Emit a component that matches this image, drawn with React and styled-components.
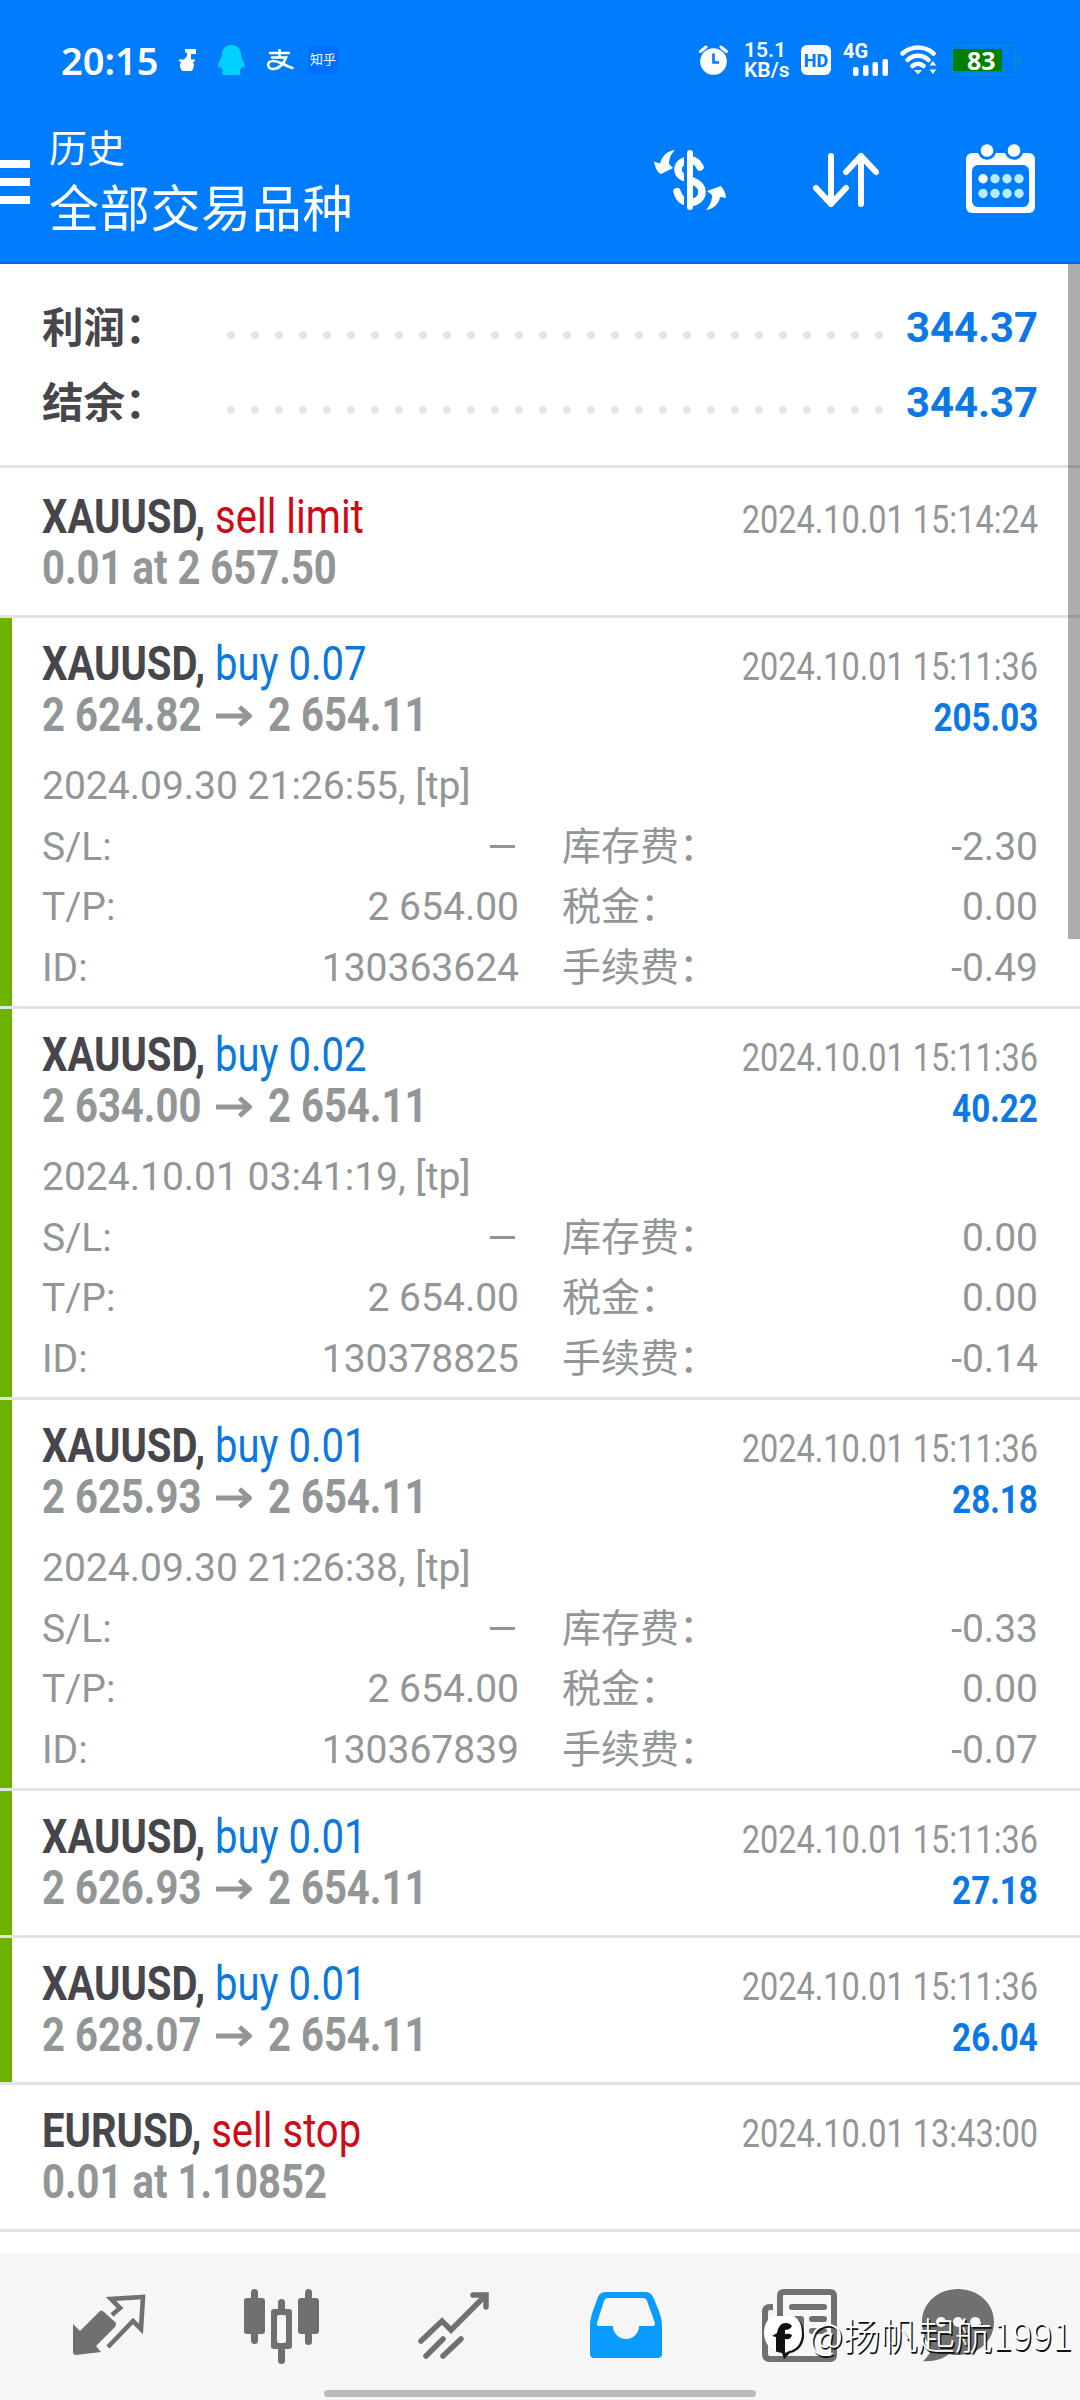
import styled, { createGlobalStyle } from "styled-components";

const GlobalStyle = createGlobalStyle`
  body {
    margin: 0;
    background: #fff;
  }
`;

const deals = [
  {
    symbol: "XAUUSD,",
    type: "sell limit",
    kind: "sell",
    price: "0.01 at 2 657.50",
    time: "2024.10.01 15:14:24",
  },
  {
    symbol: "XAUUSD,",
    type: "buy 0.07",
    kind: "buy",
    open: "2 624.82",
    close: "2 654.11",
    time: "2024.10.01 15:11:36",
    profit: "205.03",
    details: {
      opened: "2024.09.30 21:26:55, [tp]",
      id: "130363624",
      swap: "-2.30",
      fee: "-0.49",
    },
  },
  {
    symbol: "XAUUSD,",
    type: "buy 0.02",
    kind: "buy",
    open: "2 634.00",
    close: "2 654.11",
    time: "2024.10.01 15:11:36",
    profit: "40.22",
    details: {
      opened: "2024.10.01 03:41:19, [tp]",
      id: "130378825",
      swap: "0.00",
      fee: "-0.14",
    },
  },
  {
    symbol: "XAUUSD,",
    type: "buy 0.01",
    kind: "buy",
    open: "2 625.93",
    close: "2 654.11",
    time: "2024.10.01 15:11:36",
    profit: "28.18",
    details: {
      opened: "2024.09.30 21:26:38, [tp]",
      id: "130367839",
      swap: "-0.33",
      fee: "-0.07",
    },
  },
  {
    symbol: "XAUUSD,",
    type: "buy 0.01",
    kind: "buy",
    open: "2 626.93",
    close: "2 654.11",
    time: "2024.10.01 15:11:36",
    profit: "27.18",
  },
  {
    symbol: "XAUUSD,",
    type: "buy 0.01",
    kind: "buy",
    open: "2 628.07",
    close: "2 654.11",
    time: "2024.10.01 15:11:36",
    profit: "26.04",
  },
  {
    symbol: "EURUSD,",
    type: "sell stop",
    kind: "sell",
    price: "0.01 at 1.10852",
    time: "2024.10.01 13:43:00",
  },
];

const App = () => {
  return (
    <Screen>
      <GlobalStyle />
      <Header>
        <StatusBar />
        <Toolbar>
          <MenuButton>
            <span />
            <span />
            <span />
          </MenuButton>
          <Titles>
            <Title>历史</Title>
            <Subtitle>全部交易品种</Subtitle>
          </Titles>
          <Actions>
            <CurrencyIcon />
            <SortIcon />
            <CalendarIcon />
          </Actions>
        </Toolbar>
      </Header>
      <History>
        <Summary>
          <SummaryRow label="利润：" value="344.37" />
          <SummaryRow label="结余：" value="344.37" />
        </Summary>
        {deals.map((deal, i) => (
          <DealItem key={i} deal={deal} first={i === 0} />
        ))}
        <ScrollThumb />
      </History>
      <BottomNav>
        <NavItem>
          <QuotesIcon />
        </NavItem>
        <NavItem>
          <CandlesIcon />
        </NavItem>
        <NavItem>
          <TradeIcon />
        </NavItem>
        <NavItem>
          <TrayIcon />
        </NavItem>
        <NavItem $width={176}>
          <NewsIcon />
        </NavItem>
        <NavItem $width={141}>
          <ChatIcon />
        </NavItem>
        <HomeHandle />
        <Watermark>
          <WatermarkLogo />
          <span>@扬帆起航1991</span>
        </Watermark>
      </BottomNav>
    </Screen>
  );
};

const StatusBar = () => (
  <Status>
    <Clock>20:15</Clock>
    <Notifications>
      <svg width="18" height="22" viewBox="0 0 18 22" fill="#fff">
        <path d="M6 0h11v5h-5v5.500h4v2h-2.300a7 7 0 1 1-11.500 0H0v-2h5L8 7V4L6 3z" />
      </svg>
      <svg width="27" height="30" viewBox="0 0 27 30" fill="#00d2ff">
        <path d="M13.500 0c6 0 9.500 4 9.500 10 0 3 3.500 7 3.700 11 0 2-1.500 2-3 .5-.5 2-1.500 3.500-2.500 4.500 1.500 1 2.500 4-1 4H6c-3 0-2.500-3-.5-4-1-1-2-2.500-2.500-4.500-1.500 1.500-3 1.500-3-.5C.2 17 4 13 4 10 4 4 7.500 0 13.500 0z" />
      </svg>
      <svg width="28" height="22" viewBox="0 0 28 22" fill="none" stroke="#fff" strokeWidth="2.600" strokeLinecap="round">
        <path d="M4 4h19M13.500 1v7M6 8.500h14c-2 6-7 11.500-13 11.500-6 0-7-8 0-8 7 0 12 5 19.500 7" />
      </svg>
      <ZhihuBadge>知乎</ZhihuBadge>
    </Notifications>
    <Indicators>
      <svg width="29" height="30" viewBox="0 0 29 30">
        <circle cx="14.500" cy="16.500" r="13.300" fill="#fff" />
        <path d="M1.500 6.500 7 2M27.500 6.500 22 2" stroke="#fff" strokeWidth="3" strokeLinecap="round" />
        <path d="M14.500 8.500v9H20" stroke="#007cff" strokeWidth="2.600" fill="none" />
      </svg>
      <NetSpeed>
        <span>15.1</span>
        <span>KB/s</span>
      </NetSpeed>
      <HdBadge>HD</HdBadge>
      <Signal>
        <span>4G</span>
        <svg width="35" height="17" viewBox="0 0 35 17" fill="#fff">
          <rect x="0" y="8" width="5.500" height="9" rx="2" />
          <rect x="10" y="6" width="5.500" height="11" rx="2" />
          <rect x="19.500" y="3" width="5.500" height="14" rx="2" />
          <rect x="29.500" y="0" width="5.500" height="17" rx="2" />
        </svg>
      </Signal>
      <svg width="37" height="30" viewBox="0 0 37 30" fill="none" stroke="#fff" strokeWidth="4.500" strokeLinecap="round">
        <path d="M2.500 8.500a23 23 0 0 1 31 0M7.500 15a15 15 0 0 1 21 0M12.500 21a8 8 0 0 1 11 0" />
        <path d="M18 29.500l-4-4.500h8z" fill="#fff" stroke="none" />
        <path d="M33 15.500l4 5.500h-8zM33 29.500l4-5.500h-8z" fill="#fff" stroke="#007cff" strokeWidth="1" />
      </svg>
      <Battery>
        <BatteryLevel>83</BatteryLevel>
      </Battery>
    </Indicators>
  </Status>
);

const SummaryRow = ({ label, value }) => (
  <SummaryLine>
    <SummaryLabel>{label}</SummaryLabel>
    <Dots />
    <SummaryValue>{value}</SummaryValue>
  </SummaryLine>
);

const DealItem = ({ deal, first }) => (
  <Deal $closed={Boolean(deal.profit)} $first={first} $expanded={Boolean(deal.details)}>
    <DealHead>
      <DealTitle>
        <b>{deal.symbol}</b> <Side $kind={deal.kind}>{deal.type}</Side>
      </DealTitle>
      <DealTime>{deal.time}</DealTime>
    </DealHead>
    <DealHead>
      <DealPrice>
        <Price>{deal.price || deal.open}</Price>
        {deal.close && (
          <>
            <ArrowIcon />
            <Price>{deal.close}</Price>
          </>
        )}
      </DealPrice>
      {deal.profit && <DealProfit>{deal.profit}</DealProfit>}
    </DealHead>
    {deal.details && <DealDetails details={deal.details} />}
  </Deal>
);

const DealDetails = ({ details }) => (
  <Details>
    <Opened>{details.opened}</Opened>
    <Field>
      <span>S/L:</span>
      <Dash />
    </Field>
    <Field>
      <span>库存费：</span>
      <span>{details.swap}</span>
    </Field>
    <Field>
      <span>T/P:</span>
      <span>2 654.00</span>
    </Field>
    <Field>
      <span>税金：</span>
      <span>0.00</span>
    </Field>
    <Field>
      <span>ID:</span>
      <span>{details.id}</span>
    </Field>
    <Field>
      <span>手续费：</span>
      <span>{details.fee}</span>
    </Field>
  </Details>
);

const ArrowIcon = () => (
  <Arrow width="36" height="22" viewBox="0 0 36 22" fill="none" stroke="#929697" strokeWidth="4.800">
    <path d="M0 11h33M23.500 2l10 9-10 9" />
  </Arrow>
);

const CurrencyIcon = () => (
  <svg width="72" height="62" viewBox="0 0 72 62" fill="none" stroke="#fff">
    <path d="M46 18c-2-4-5-7-10-7-7 0-12 4-12 9.500 0 6 5 8 12 10.500 8 3 12 6 12 12 0 6-5 10.500-12 10.500-7 0-11-4-13-11" strokeWidth="7.500" strokeLinecap="round" />
    <path d="M33 5v54" strokeWidth="6" stroke="#007cff" />
    <path d="M36 4v54" strokeWidth="6" strokeLinecap="round" />
    <path d="M0 12.500l6 2C8 7 13 2 21 1c-4 4-6 8-6 14l4 4-12 6C4 24 1 19 0 12.500z" fill="#fff" stroke="none" />
    <path d="M72 49l-6-1c-1 6-6 12-14 13 4-5 6-9 6-15l-5-4 14-5c3 4 5 8 5 12z" fill="#fff" stroke="none" />
  </svg>
);

const SortIcon = () => (
  <svg width="66" height="56" viewBox="0 0 66 56" fill="none" stroke="#fff" strokeWidth="6" strokeLinecap="round" strokeLinejoin="round">
    <path d="M18 4v48M3 36l15 16 15-16" />
    <path d="M48 52V4M33 20 48 4l15 16" />
  </svg>
);

const CalendarIcon = () => (
  <svg width="70" height="72" viewBox="0 0 70 72">
    <rect x="0" y="9" width="69" height="60" rx="6" fill="#fff" />
    <rect x="6" y="21" width="57" height="42" rx="6" fill="#007cff" />
    <g fill="#fff" stroke="#007cff" strokeWidth="3">
      <circle cx="21" cy="6.500" r="7.800" />
      <circle cx="48" cy="6.500" r="7.800" />
    </g>
    {[17, 29, 41, 53].map((x) => (
      <g key={x} fill={x === 17 ? "#fff" : "#b8ecff"}>
        <circle cx={x} cy="34.700" r="4.700" />
        <circle cx={x} cy="49.500" r="4.700" fill="#b8ecff" />
      </g>
    ))}
  </svg>
);

const QuotesIcon = () => (
  <svg width="74" height="76" viewBox="0 0 74 76">
    <path d="M0 35l7 7 19-19q2-3 5 0l11 10q2 2 0 5L23 57l5 6-25 3q-3 0-3-3z" fill="#707070" />
    <path d="M39 26l8-7-9-9 32-2-2 32-8-8-25 26" fill="none" stroke="#707070" strokeWidth="4.600" />
  </svg>
);

const CandlesIcon = () => (
  <svg width="76" height="76" viewBox="0 0 76 76" fill="#707070">
    <rect x="7" y="0" width="7" height="55" rx="3.500" />
    <rect x="0" y="9" width="21" height="36" rx="3" />
    <rect x="61" y="0" width="7" height="56" rx="3.500" />
    <rect x="54" y="9" width="21" height="36" rx="3" />
    <rect x="34" y="10" width="7" height="65" rx="3.500" />
    <rect x="27" y="20" width="21" height="40" rx="3" />
    <rect x="33" y="26" width="9" height="28" rx="2" fill="#f6f6f6" />
  </svg>
);

const TradeIcon = () => (
  <svg width="74" height="76" viewBox="0 0 74 76" fill="none" stroke="#707070" strokeWidth="5.500" strokeLinecap="round">
    <path d="M4 52l21-20 9 9 35-35M56 6h13v12" />
    <path d="M9 67l17-17M26 67l18-17" />
  </svg>
);

const TrayIcon = () => (
  <svg width="74" height="76" viewBox="0 0 74 76">
    <path d="M17 3h39q6 0 8 5c5 11 9 20 9 29v28q0 4-4 4H5q-4 0-4-4V37C1 28 5 19 9 8q2-5 8-5z" fill="#0a9bff" />
    <path d="M19 9h35q3 0 4 3l8 22q0 3-2 3H50a13 13 0 0 1-26 0H10q-3 0-2-3l7-22q1-3 4-3z" fill="#f6f6f6" />
  </svg>
);

const NewsIcon = () => (
  <svg width="76" height="76" viewBox="0 0 76 76" fill="none" stroke="#707070" strokeWidth="6">
    <path d="M11 18H8q-5 0-5 5v42q0 5 5 5h60q4 0 4-4V7q0-4-4-4H22q-4 0-4 4v54" />
    <path d="M30 18h32M50 30h12M50 42h12" strokeLinecap="round" />
    <rect x="27" y="27" width="15" height="24" rx="3" fill="#707070" stroke="none" />
  </svg>
);

const ChatIcon = () => (
  <svg width="74" height="76" viewBox="0 0 74 76">
    <path d="M36 0c20 0 36 14 36 33S56 66 36 66c-3 0-6 0-9-1-6 5-16 8-26 7 5-4 8-9 8-15C3 51 0 43 0 33 0 14 16 0 36 0z" fill="#707070" />
    <g fill="#f6f6f6">
      <circle cx="19" cy="33" r="5" />
      <circle cx="36" cy="33" r="5" />
      <circle cx="53" cy="33" r="5" />
    </g>
  </svg>
);

const WatermarkLogo = () => (
  <svg width="41" height="46" viewBox="0 0 41 46">
    <path d="M11 2h20q9 5 9 18c0 11-7 17-14 18l-6 6-2-6C8 37 2 30 2 20 2 12 5 5 11 2z" fill="#111" />
    <path d="M9 1h21q8 5 8 17c0 11-6 17-13 18l-4 2V24q6 1 7-4-3-2-7-1v-4q5 0 7-4-2-3-6-3c-6 0-8 5-9 10l-5 3 4 1v15C5 33 0 27 0 18 0 10 3 4 9 1z" fill="#fff" />
  </svg>
);

const sans = `Roboto, "Noto Sans CJK SC", sans-serif`;

const Screen = styled.div`
  width: 1080px;
  height: 2400px;
  display: flex;
  flex-direction: column;
  overflow: hidden;
  background: #fff;
  font-family: ${sans};
`;

const Header = styled.header`
  height: 264px;
  flex: none;
  box-sizing: border-box;
  background: #007cff;
  border-bottom: 2px solid #0a68d8;
  color: #fff;
`;

const Status = styled.div`
  height: 120px;
  display: flex;
  align-items: center;
  padding: 0 64px 0 61px;
  box-sizing: border-box;
`;

const Clock = styled.span`
  width: 118px;
  font: 600 38px "Noto Sans", sans-serif;
`;

const Notifications = styled.div`
  display: flex;
  align-items: center;
  gap: 21px;
`;

const ZhihuBadge = styled.span`
  width: 30px;
  height: 28px;
  margin-left: -7px;
  background: #0070ff;
  font-size: 13px;
  line-height: 28px;
  text-align: center;
`;

const Indicators = styled.div`
  margin-left: auto;
  display: flex;
  align-items: center;
`;

const NetSpeed = styled.div`
  width: 44px;
  margin: 0 13px 0 16px;
  display: flex;
  flex-direction: column;
  font: 600 21px/20px Roboto, sans-serif;
  white-space: nowrap;
`;

const HdBadge = styled.span`
  width: 30px;
  height: 30px;
  border-radius: 6px;
  background: #fff;
  color: #007cff;
  font-size: 18px;
  font-weight: 800;
  line-height: 31px;
  text-align: center;
`;

const Signal = styled.div`
  width: 45px;
  height: 32px;
  margin: 0 12px;
  display: flex;
  flex-direction: column;
  align-items: flex-end;
  font: 700 20px/15px Roboto, sans-serif;

  span {
    align-self: flex-start;
  }
`;

const Battery = styled.div`
  position: relative;
  width: 65px;
  height: 32px;
  margin-left: 14px;
  box-sizing: border-box;
  border: 2px solid #0a86dc;
  border-radius: 4px;
  padding: 3px 0;

  &::after {
    content: "";
    position: absolute;
    right: -7px;
    top: 8px;
    width: 4px;
    height: 12px;
    border-radius: 0 4px 4px 0;
    background: #0a86dc;
  }
`;

const BatteryLevel = styled.div`
  width: 49px;
  height: 22px;
  background: #008000;
  font: 700 25px/22px "Noto Sans", sans-serif;
  text-indent: 14px;
`;

const Toolbar = styled.div`
  display: flex;
  height: 142px;
`;

const MenuButton = styled.button`
  width: 30px;
  margin: 40px 19px 0 0;
  padding: 0;
  border: 0;
  background: none;
  display: flex;
  flex-direction: column;
  gap: 10px;

  span {
    width: 30px;
    height: 8px;
    background: #fff;
  }
`;

const Titles = styled.div`
  flex: 1;
  padding-top: 2px;
`;

const Title = styled.h1`
  margin: 0;
  font-size: 38px;
  line-height: 54px;
  font-weight: 400;
`;

const Subtitle = styled.h2`
  margin: 0;
  font-size: 50px;
  line-height: 68px;
  font-weight: 400;
  letter-spacing: 0.700px;
`;

const Actions = styled.div`
  display: flex;
  align-items: center;
  gap: 87px;
  margin-right: 44px;
  height: 120px;
`;

const History = styled.main`
  position: relative;
  height: 1989px;
  flex: none;
  background: #fff;
`;

const Summary = styled.section`
  height: 204px;
  box-sizing: border-box;
  padding: 26px 42px 0;
  border-bottom: 3px solid #e3e3e3;
`;

const SummaryLine = styled.div`
  height: 75px;
  display: flex;
  align-items: center;
`;

const SummaryLabel = styled.span`
  width: 177px;
  flex: none;
  padding-bottom: 5px;
  color: #46464b;
  font-size: 41.500px;
  font-weight: 700;
`;

const Dots = styled.div`
  width: 672px;
  height: 24px;
  margin-top: 15px;
  background: radial-gradient(circle, #e4e4e4 3.700px, transparent 4.200px) 0 0 / 24px 24px;
`;

const SummaryValue = styled.span`
  margin-left: auto;
  color: #0a78e6;
  font-size: 41.800px;
  font-weight: 700;
`;

const Deal = styled.article`
  box-sizing: border-box;
  padding: ${(props) => (props.$first ? "24px" : "21px")} 42px ${(props) => (props.$expanded ? "8px" : "21px")};
  box-shadow: inset ${(props) => (props.$closed ? "12px" : "0")} 0 #6cb300;
  border-bottom: 3px solid #e3e3e3;
`;

const DealHead = styled.div`
  height: 51px;
  display: flex;
  justify-content: space-between;
  align-items: baseline;
  line-height: 51px;
  white-space: nowrap;
`;

// Squeezes the regular face to condensed proportions.
const Condensed = styled.span`
  display: inline-block;
  transform-origin: left;
`;

const DealTitle = styled(Condensed)`
  transform: scaleX(0.843);
  color: #46464b;
  font-size: 47.500px;
`;

const Side = styled.span`
  color: ${(props) => (props.$kind === "sell" ? "#cf0a16" : "#0a78dc")};
`;

const DealTime = styled(Condensed)`
  transform: scaleX(0.832);
  transform-origin: right;
  color: #929697;
  font-size: 39px;
`;

const DealPrice = styled.div`
  display: flex;
  color: #929697;
  font-size: 47.500px;
  font-weight: 700;
`;

const Price = styled(Condensed)`
  transform: scaleX(0.843);
`;

const Arrow = styled.svg`
  margin: 15px 16px 0 -15px;
`;

const DealProfit = styled(Condensed)`
  transform: scaleX(0.85);
  transform-origin: right;
  color: #0a78e6;
  font-size: 39px;
  font-weight: 700;
`;

const Details = styled.div`
  display: grid;
  grid-template-columns: 477px 476px;
  column-gap: 43px;
  grid-auto-rows: 60.500px;
  margin-top: 15px;
  color: #929697;
  font-size: 39px;
  line-height: 60px;
`;

const Opened = styled.div`
  grid-column: 1 / -1;
`;

const Field = styled.div`
  display: flex;
  justify-content: space-between;
`;

const Dash = styled.i`
  width: 25px;
  height: 3px;
  margin: 28px 4px 0 0;
  background: #929697;
`;

const ScrollThumb = styled.div`
  position: absolute;
  top: 0;
  right: 0;
  width: 12px;
  height: 675px;
  background: rgba(0, 0, 0, 0.32);
`;

const BottomNav = styled.nav`
  position: relative;
  flex: 1;
  display: flex;
  box-sizing: border-box;
  padding: 36px 24px 0;
  background: #f6f6f6;
`;

const NavItem = styled.div`
  width: ${(props) => props.$width || 172}px;
  display: flex;
  justify-content: center;
`;

const HomeHandle = styled.div`
  position: absolute;
  left: 324px;
  bottom: 3px;
  width: 432px;
  height: 7px;
  border-radius: 4px;
  background: #bababa;
`;

const Watermark = styled.div`
  position: absolute;
  left: 764px;
  top: 62px;
  display: flex;
  gap: 4px;
  color: #fff;
  font: 300 37.300px/38px "Noto Sans CJK SC", sans-serif;
  text-shadow: 1.500px 1.500px 0 #111;
  white-space: nowrap;
`;

export default App;
